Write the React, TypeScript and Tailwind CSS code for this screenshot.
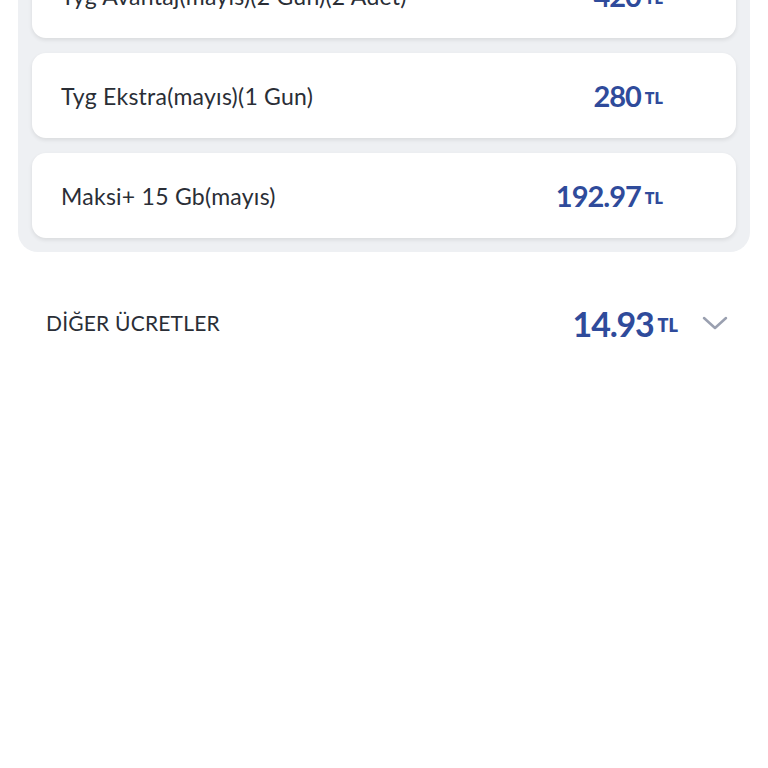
import React from "react";

const items = [
  { name: "Tyg Avantaj(mayıs)(2 Gun)(2 Adet)", price: "420" },
  { name: "Tyg Ekstra(mayıs)(1 Gun)", price: "280" },
  { name: "Maksi+ 15 Gb(mayıs)", price: "192.97" },
];

export default function App() {
  return (
    <div
      className="w-[768px] h-[768px] overflow-hidden bg-white"
      style={{ fontFamily: "Lato, 'Noto Sans', sans-serif" }}
    >
      <div className="mx-[18px] -mt-[61px] rounded-[20px] bg-[#eef0f3] px-[14px] py-[14px] flex flex-col gap-[15px]">
        {items.map((it) => (
          <div
            key={it.name}
            className="h-[85px] rounded-[14px] bg-white shadow-[0_2px_4px_rgba(0,0,0,0.09)] flex items-center pl-[29px] pr-[73px]"
          >
            <span className="flex-1 text-[23px] tracking-[0.25px] text-[#2a2e36] pt-[2px]">{it.name}</span>
            <span className="text-[#2f4b9b] whitespace-nowrap">
              <span className="text-[29px] font-bold tracking-[-1px]">{it.price}</span>
              <span className="text-[16px] font-extrabold ml-[4px] align-[3px]">TL</span>
            </span>
          </div>
        ))}
      </div>
      <div className="flex items-center mt-[49px] pl-[46px] pr-[40px] h-[44px]">
        <span className="flex-1 text-[21px] text-[#2a2e36] tracking-[0.2px]">DİĞER ÜCRETLER</span>
        <span className="text-[#2f4b9b] whitespace-nowrap">
          <span className="text-[34px] font-bold tracking-[-1.2px]">14.93</span>
          <span className="text-[18px] font-extrabold ml-[4px] align-[5px]">TL</span>
        </span>
        <svg
          className="ml-[24px]"
          width="26"
          height="16"
          viewBox="0 0 26 16"
          fill="none"
          stroke="#9aa0b0"
          strokeWidth="2.5"
          strokeLinecap="round"
          strokeLinejoin="round"
        >
          <path d="M2 3 L13 13 L24 3" />
        </svg>
      </div>
    </div>
  );
}
